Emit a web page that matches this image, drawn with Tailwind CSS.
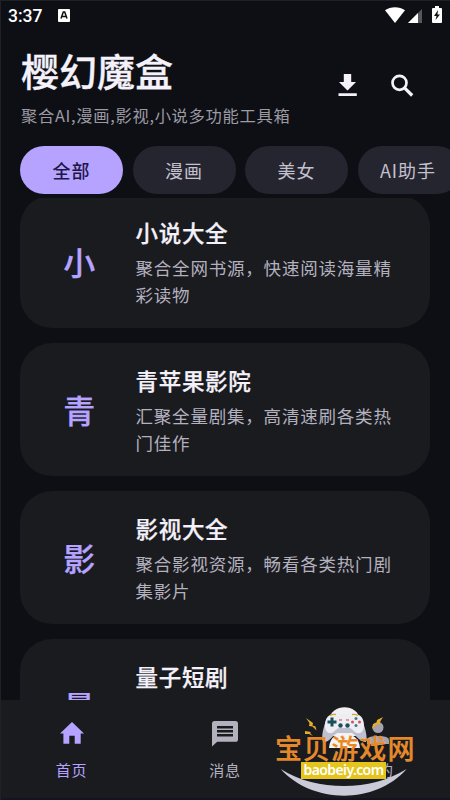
<!DOCTYPE html>
<html lang="zh-CN">
<head>
<meta charset="utf-8">
<title>樱幻魔盒</title>
<script src="https://cdn.jsdelivr.net/npm/@tailwindcss/browser@4"></script>
</head>
<body class="bg-[#0e0f14]">
<div class="relative flex h-[800px] w-[450px] flex-col overflow-hidden border-l border-t border-[#202126] bg-[#0e0f14] font-['Noto_Sans_CJK_SC',sans-serif] text-[#f4f1fa]">
  <header class="flex h-[30px] shrink-0 items-center pl-[7px] pr-[8px]">
    <span class="font-[Roboto,sans-serif] text-[17.5px] leading-5 font-medium text-white">3:37</span>
    <svg class="-mt-[2px] ml-[16px]" width="12" height="13" viewBox="0 0 12 13"><rect width="12" height="13" rx="1" fill="#fff"/><path d="M3 9.5 5.3 3h1.4L9 9.5M4 7.5h4" fill="none" stroke="#111" stroke-width="1.5"/></svg>
    <svg class="-mt-[2px] ml-auto" width="20" height="16" viewBox="0 0 20 16"><path d="M0 3.2C5.500-.8 14.500-.8 20 3.200L10 16Z" fill="#fff"/></svg>
    <svg class="ml-[3px]" width="14" height="14" viewBox="0 0 14 14"><path d="M14 0V14H0Z" fill="#56575b"/><path d="M10 4V14H0Z" fill="#fff"/></svg>
    <svg class="-mt-[3px] ml-[10px]" width="10" height="17" viewBox="0 0 10 17"><path d="M3 0h4v2h2q1 0 1 1v13q0 1-1 1H1q-1 0-1-1V3q0-1 1-1h2Z" fill="#fff"/><path d="M6 4 2 10h2.500L3.500 14 8 8.500H5.500Z" fill="#111"/></svg>
  </header>
  <div class="flex h-[115px] shrink-0 justify-between pl-[20px] pr-[36px]">
    <div>
      <h1 class="mt-[14px] text-[38px] leading-[50px] font-medium [-webkit-text-stroke:0.3px_#f4f1fa]">樱幻魔盒</h1>
      <p class="mt-[8px] text-[16.3px] leading-6 tracking-[0.7px] text-[#9c9ba5]">聚合AI,漫画,影视,小说多功能工具箱</p>
    </div>
    <div class="flex gap-[33px] pt-[43px]">
      <svg width="20" height="23" viewBox="0 0 20 23"><path d="M5.800 0h7.400v8H18l-8.500 8.500L1 8h4.800ZM.5 19.200h18.300v2.900H.5Z" fill="#f4f1fa"/></svg>
      <svg width="23" height="23" viewBox="0 0 23 23" fill="none" stroke="#f4f1fa"><circle cx="8.500" cy="8.800" r="7" stroke-width="2.700"/><path d="m13.500 13.800 7.700 7.700" stroke-width="3.200"/></svg>
    </div>
  </div>
  <div class="flex h-[52px] shrink-0 gap-[9.5px] pl-[19px] text-[18px] tracking-[1px] text-[#c4c1cf]">
    <div class="flex h-[48px] w-[103px] shrink-0 items-center justify-center rounded-full bg-[#b5a3ff] font-medium text-[#211447]">全部</div>
    <div class="flex h-[48px] w-[103px] shrink-0 items-center justify-center rounded-full bg-[#25252f]">漫画</div>
    <div class="flex h-[48px] w-[103px] shrink-0 items-center justify-center rounded-full bg-[#25252f]">美女</div>
    <div class="flex h-[48px] w-[103px] shrink-0 items-center justify-center rounded-full bg-[#25252f] pr-[2px]">AI助手</div>
  </div>
  <main class="min-h-0 flex-1 overflow-hidden pl-[19px] pr-[20px]">
    <div class="-mt-[3px] flex flex-col gap-[15.5px]">
      <article class="flex h-[132.5px] shrink-0 rounded-[32px] bg-[#1a1b1f]">
        <div class="flex w-[115.500px] shrink-0 items-center justify-center pb-[1px] pl-[3px] text-[32px] font-medium text-[#b5a3ff] [-webkit-text-stroke:0.25px_#b5a3ff]">小</div>
        <div class="pt-[19.500px]"><h2 class="text-[22.500px] leading-[34px] font-medium tracking-[0.7px] [-webkit-text-stroke:0.25px_#f4f1fa]">小说大全</h2><p class="mt-[5.500px] w-[262px] text-[17.500px] leading-[27px] tracking-[0.8px] text-[#b4b1bf]">聚合全网书源，快速阅读海量精彩读物</p></div>
      </article>
      <article class="flex h-[132.5px] shrink-0 rounded-[32px] bg-[#1a1b1f]">
        <div class="flex w-[115.500px] shrink-0 items-center justify-center pb-[1px] pl-[3px] text-[32px] font-medium text-[#b5a3ff] [-webkit-text-stroke:0.25px_#b5a3ff]">青</div>
        <div class="pt-[19.500px]"><h2 class="text-[22.500px] leading-[34px] font-medium tracking-[0.7px] [-webkit-text-stroke:0.25px_#f4f1fa]">青苹果影院</h2><p class="mt-[5.500px] w-[262px] text-[17.500px] leading-[27px] tracking-[0.8px] text-[#b4b1bf]">汇聚全量剧集，高清速刷各类热门佳作</p></div>
      </article>
      <article class="flex h-[132.5px] shrink-0 rounded-[32px] bg-[#1a1b1f]">
        <div class="flex w-[115.500px] shrink-0 items-center justify-center pb-[1px] pl-[3px] text-[32px] font-medium text-[#b5a3ff] [-webkit-text-stroke:0.25px_#b5a3ff]">影</div>
        <div class="pt-[19.500px]"><h2 class="text-[22.500px] leading-[34px] font-medium tracking-[0.7px] [-webkit-text-stroke:0.25px_#f4f1fa]">影视大全</h2><p class="mt-[5.500px] w-[262px] text-[17.500px] leading-[27px] tracking-[0.8px] text-[#b4b1bf]">聚合影视资源，畅看各类热门剧集影片</p></div>
      </article>
      <article class="flex h-[132.5px] shrink-0 rounded-[32px] bg-[#1a1b1f]">
        <div class="flex w-[115.500px] shrink-0 items-center justify-center pb-[1px] pl-[3px] text-[32px] font-medium text-[#b5a3ff] [-webkit-text-stroke:0.25px_#b5a3ff]">量</div>
        <div class="pt-[19.500px]"><h2 class="text-[22.500px] leading-[34px] font-medium tracking-[0.7px] [-webkit-text-stroke:0.25px_#f4f1fa]">量子短剧</h2></div>
      </article>
    </div>
  </main>
  <nav class="relative grid h-[100px] shrink-0 grid-cols-[141px_166px_142px] border-b-2 border-[#141420] bg-[#1a1b1f] text-[15px] leading-[22px] tracking-[0.7px] text-[#b4b1bf]">
    <div class="flex flex-col items-center pt-[22px] text-[#b5a3ff]">
      <svg width="24" height="22" viewBox="0 0 24 22"><path d="M12 0 24 11.500H20.700V21.800H14.700V13.800H9.300V21.800H3.400V11.500H0Z" fill="currentColor"/></svg>
      <span class="mt-[15px]">首页</span>
    </div>
    <div class="flex flex-col items-center pt-[21px]">
      <svg width="26" height="26" viewBox="0 0 26 26"><path fill-rule="evenodd" d="M2.600 0h20.800Q26 0 26 2.600v15.600q0 2.600-2.600 2.600H5.200L0 25.500V2.600Q0 0 2.600 0ZM5 5v2.600h16V5ZM5 9v2.600h16V9ZM5 13v2.600h16V13Z" fill="currentColor"/></svg>
      <span class="mt-[12px]">消息</span>
    </div>
    <div class="flex flex-col items-center pr-[2px] pt-[22px]">
      <svg width="22" height="24" viewBox="0 0 22 24" fill="#a4a2ac"><circle cx="11" cy="5.500" r="5.500"/><path d="M0 22v-4q0-4 11-4t11 4v4Z"/></svg>
      <span class="mt-[13px]">我的</span>
    </div>
    <div class="absolute left-[273px] top-[6px] h-[94px] w-[143px]">
      <svg class="absolute inset-0" width="143" height="94" viewBox="0 0 143 94">
        <path d="M6.700 63C38 98 101 99 132.700 63C112 75 93 80 70 80C47 80 26 75 6.700 63Z" fill="#cbcad8"/>
        <path d="M55 14C57-3 84-3 86 14V30H55Z" fill="#f1f1f3"/>
        <path d="M53 12C49 22 47 31 49 36C55 37 58 30 63 27H78C83 30 86 36 92 36C94 32 91 20 87 12Z" fill="#bfc0cf"/>
        <path d="M56 9Q70 7 85 9C91 12 92 25 86 27C81 28 79 23 76 22H65C61 23 60 28 55 27C49 25 50 12 56 9Z" fill="#eeedf2"/>
        <path d="M55 42C56 30 63 28 70 28C78 28 85 31 86 42Z" fill="#f5f4f5"/>
        <path d="M56 9.500q2-1.500 6-1M78 8.500q4-.5 6 1" fill="none" stroke="#d9a32f" stroke-width="1.500"/>
        <path d="M58 11.500v9M53.500 16h9" stroke="#17515b" stroke-width="3"/>
        <circle cx="82" cy="12.500" r="1.500" fill="#397d87"/><circle cx="82" cy="19.500" r="1.500" fill="#397d87"/><circle cx="78.500" cy="16" r="1.500" fill="#dc4f61"/><circle cx="85.500" cy="16" r="1.500" fill="#dc4f61"/>
        <circle cx="66.500" cy="19.500" r="2.200" fill="#17515b"/><circle cx="73.500" cy="19.500" r="2.200" fill="#17515b"/><path d="M65 14h3M72 14h3" stroke="#c44058"/>
        <path d="m32 12 7 5-.5 2.500 3 1 1 4-4-4-3.500-.5.500-3ZM31 25l6 1-1 1 3 3-4-2-4 0ZM109 11l-6 3-.5 3-3.500 1-1 5 4-4 4-1 .5-3Z" fill="#e5ad29"/>
      </svg>
      <div class="absolute left-[1px] top-[22.500px] whitespace-nowrap text-[27px] leading-[38px] font-medium tracking-[1.1px] text-[#e98722] [-webkit-text-stroke:0.2px_#ffbd6b]">宝贝游戏网</div>
      <div class="absolute left-[27px] top-[55.500px] flex h-[17px] w-[85px] items-center justify-center bg-[#e5c51c] font-['Noto_Sans',sans-serif] text-[14px] leading-[17px] font-semibold tracking-[-0.6px] text-white"><span class="-mt-[2px]">baobeiy.com</span></div>
    </div>
  </nav>
</div>
</body>
</html>
